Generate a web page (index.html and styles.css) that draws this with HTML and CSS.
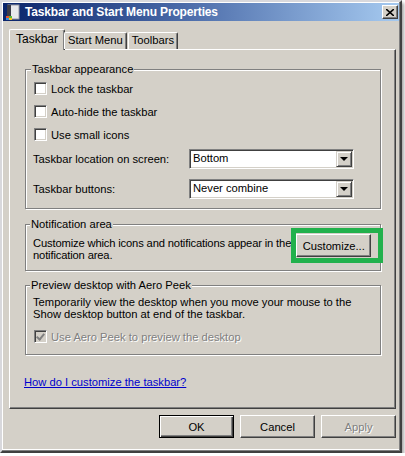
FILE: index.html
```html
<!DOCTYPE HTML>
<html>
<head>
  <title>Taskbar and Start Menu Properties</title>
  <meta charset="utf-8">
  <link rel="stylesheet" href="styles.css">
</head>
<body>
  <div class="window">
    <div class="titlebar">
      <svg class="app-icon" width="16" height="16" viewBox="0 0 16 16">
        <rect x="3" y="1" width="11" height="14" fill="#e8e8ec" stroke="#9a9aa4" stroke-width="1"/>
        <rect x="2" y="1" width="4" height="11" fill="#3c3c48"/>
        <rect x="1" y="12" width="3" height="2" fill="#e8522a"/>
        <rect x="4" y="12" width="3" height="2" fill="#5cb83c"/>
        <rect x="1" y="14" width="3" height="2" fill="#2a8ce8"/>
        <rect x="4" y="14" width="3" height="2" fill="#f8c418"/>
      </svg>
      <span class="title">Taskbar and Start Menu Properties</span>
      <span class="close-btn">
        <svg width="8" height="7" viewBox="0 0 8 7">
          <path d="M0 0 L8 7 M8 0 L0 7" stroke="#000" stroke-width="1.6"/>
        </svg>
      </span>
    </div>

    <div class="content">
      <div class="tabs">
        <div class="tab active">Taskbar</div>
        <div class="tab">Start Menu</div>
        <div class="tab">Toolbars</div>
      </div>

      <div class="panel">
        <fieldset class="group appearance">
          <legend>Taskbar appearance</legend>
          <label class="check"><span class="box"></span>Lock the taskbar</label>
          <label class="check"><span class="box"></span>Auto-hide the taskbar</label>
          <label class="check"><span class="box"></span>Use small icons</label>
          <div class="field">
            <span class="field-label">Taskbar location on screen:</span>
            <div class="select">Bottom<span class="drop"><span class="arrow"></span></span></div>
          </div>
          <div class="field">
            <span class="field-label">Taskbar buttons:</span>
            <div class="select">Never combine<span class="drop"><span class="arrow"></span></span></div>
          </div>
        </fieldset>

        <fieldset class="group notify">
          <legend>Notification area</legend>
          <div class="notify-row">
            <p class="note">Customize which icons and notifications appear in the<br>notification area.</p>
            <div class="highlight">
              <button class="btn">Customize...</button>
            </div>
          </div>
        </fieldset>

        <fieldset class="group peek">
          <legend>Preview desktop with Aero Peek</legend>
          <p class="note">Temporarily view the desktop when you move your mouse to the<br>Show desktop button at end of the taskbar.</p>
          <label class="check disabled"><span class="box checked"></span>Use Aero Peek to preview the desktop</label>
        </fieldset>

        <a class="help-link" href="#">How do I customize the taskbar?</a>
      </div>

      <div class="buttons">
        <button class="btn default">OK</button>
        <button class="btn">Cancel</button>
        <button class="btn disabled">Apply</button>
      </div>
    </div>
  </div>
</body>
</html>
```

FILE: styles.css
```css
* {
  box-sizing: border-box;
}
html {
  font-family: "Liberation Sans", Tahoma, sans-serif;
  font-size: 11.2px;
}
body {
  margin: 0;
  background-color: #fff;
}
.window {
  width: 402px;
  height: 453px;
  padding: 1px;
  background-color: #d4d0c8;
  border: 2px solid;
  border-color: #d8d8dc #404040 #404040 #d8d8dc;
  box-shadow: inset -1px -1px 0 #808080, inset 1px 1px 0 #fff, inset 0 -2px 0 #fff, 2px 3px 3px rgba(0, 0, 0, .35);
  display: flex;
  flex-direction: column;
}
.titlebar {
  height: 18px;
  display: flex;
  align-items: center;
  padding: 0 1px 0 2px;
  background: linear-gradient(to right, #0a246a, #4a6aa8 45%, #a6caf0);
  color: #fff;
}
.app-icon {
  flex: none;
}
.title {
  margin-left: 4px;
  font-weight: bold;
  font-size: 12px;
  letter-spacing: -0.15px;
  flex: 1;
}
.close-btn {
  width: 16px;
  height: 14px;
  display: flex;
  align-items: center;
  justify-content: center;
  background-color: #d4d0c8;
  border: 1px solid;
  border-color: #fff #404040 #404040 #fff;
  box-shadow: inset -1px -1px 0 #808080;
}
.content {
  flex: 1;
  padding: 8px 3px 0 6px;
  display: flex;
  flex-direction: column;
}
.tabs {
  display: flex;
  align-items: flex-end;
  height: 20px;
  padding-left: 1px;
  position: relative;
  z-index: 1;
}
.tab {
  height: 17px;
  line-height: 15px;
  padding: 0 3px;
  border: 1px solid;
  border-bottom: none;
  border-color: #fff #404040 #fff #fff;
  box-shadow: inset -1px 0 0 #808080;
  border-radius: 2px 2px 0 0;
  background-color: #d4d0c8;
}
.tab + .tab {
  margin-left: 1px;
}
.tab.active {
  height: 21px;
  line-height: 18px;
  padding: 0 6px 0 6px;
  margin-bottom: -1px;
  margin-left: -1px;
  margin-right: -1px;
  font-size: 12px;
}
.tab.active + .tab {
  margin-left: 0;
}
.panel {
  height: 360px;
  padding: 13px 13px 0 15px;
  border: 1px solid;
  border-color: #fff #404040 #404040 #fff;
  box-shadow: inset -1px -1px 0 #808080;
  display: flex;
  flex-direction: column;
  align-items: flex-start;
}
.group {
  width: 356px;
  margin: 0;
  border: 1px solid #808080;
  box-shadow: inset 1px 1px 0 #fff, 1px 1px 0 #fff;
  padding: 6px 0 9px 8px;
}
.group legend {
  padding: 0 1px;
  margin-left: -3px;
  line-height: 13px;
  height: 13px;
  background-color: #d4d0c8;
}
.check {
  display: flex;
  align-items: center;
  height: 13px;
  margin-bottom: 10px;
}
.check .box {
  width: 13px;
  height: 13px;
  margin-right: 4px;
  background-color: #fff;
  border: 1px solid;
  border-color: #808080 #fff #fff #808080;
  box-shadow: inset 1px 1px 0 #404040, inset -1px -1px 0 #d4d0c8;
  position: relative;
}
.appearance .check:nth-of-type(3) {
  margin-bottom: 8px;
}
.field {
  display: flex;
  align-items: center;
  height: 20px;
  margin-left: -1px;
}
.field + .field {
  margin-top: 10px;
}
.field-label {
  width: 156px;
}
.select {
  width: 165px;
  height: 20px;
  line-height: 16px;
  padding-left: 3px;
  background-color: #fff;
  border: 1px solid;
  border-color: #808080 #fff #fff #808080;
  box-shadow: inset 1px 1px 0 #404040, inset -1px -1px 0 #d4d0c8;
  display: flex;
  justify-content: space-between;
}
.drop {
  width: 16px;
  height: 16px;
  margin: 1px 1px 0 0;
  background-color: #d4d0c8;
  border: 1px solid;
  border-color: #d4d0c8 #404040 #404040 #d4d0c8;
  box-shadow: inset 1px 1px 0 #fff, inset -1px -1px 0 #808080;
  display: flex;
  align-items: center;
  justify-content: center;
}
.arrow {
  width: 0;
  height: 0;
  border-left: 4px solid transparent;
  border-right: 4px solid transparent;
  border-top: 4px solid #000;
}
.notify {
  margin-top: 9px;
  padding: 6px 0 7px 7px;
}
.notify-row {
  display: flex;
  align-items: flex-start;
}
.note {
  margin: 0;
  line-height: 12px;
  white-space: nowrap;
}
.notify .note {
  flex: 1;
  min-width: 0;
  letter-spacing: -0.15px;
}
.highlight {
  flex: none;
  margin: -9px -3px 0 0;
  padding: 1px 7px 1px 0;
  border: 5px solid #22b14c;
  position: relative;
}
.btn {
  width: 75px;
  height: 23px;
  padding: 0;
  font: inherit;
  color: #000;
  background-color: #d4d0c8;
  border: 1px solid;
  border-color: #fff #404040 #404040 #fff;
  box-shadow: inset -1px -1px 0 #808080;
}
.btn.default {
  border-color: #000;
  box-shadow: inset 1px 1px 0 #fff, inset -1px -1px 0 #404040, inset -2px -2px 0 #808080;
}
.btn.disabled {
  color: #808080;
  text-shadow: 1px 1px 0 #fff;
}
.peek {
  margin-top: 8px;
  padding: 4px 0 11px 7px;
}
.peek .check {
  margin: 10px 0 0 1px;
}
.check.disabled {
  color: #808080;
  text-shadow: 1px 1px 0 #fff;
}
.box.checked {
  background-color: #d4d0c8;
}
.box.checked::after {
  content: "";
  position: absolute;
  left: 3px;
  top: 1px;
  width: 3px;
  height: 6px;
  border: solid #808080;
  border-width: 0 2px 2px 0;
  transform: rotate(40deg);
}
.help-link {
  margin-top: 21px;
  margin-left: -1px;
  line-height: 13px;
  color: #0000cc;
  text-decoration: underline;
}
.buttons {
  display: flex;
  justify-content: flex-end;
  gap: 6px;
  margin-top: 6px;
}
```
